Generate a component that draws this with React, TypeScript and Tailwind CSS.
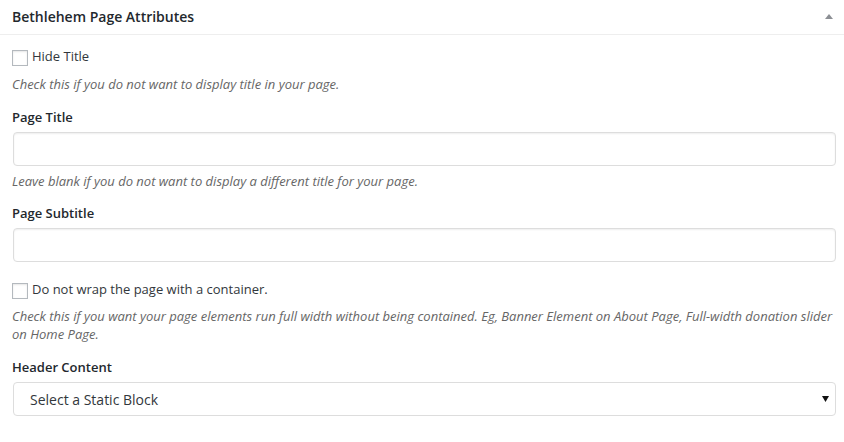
export default function App() {
  return (
    <div
      className="w-[844px] h-[442px] bg-white text-[#32373c] text-[13px]"
      style={{ fontFamily: '"Open Sans", "Liberation Sans", sans-serif' }}
    >
      {/* Metabox header */}
      <div className="h-[35px] border-b border-[#eeeeee] px-3 flex items-center justify-between">
        <h2 className="text-[14px] font-semibold text-[#23282d] leading-none">Bethlehem Page Attributes</h2>
        <svg width="8" height="5" viewBox="0 0 8 5" className="-mr-px -mt-[2px]">
          <path d="M4 0 L8 5 L0 5 Z" fill="#8c8f94" />
        </svg>
      </div>

      <div className="px-3">
        {/* Hide title */}
        <label className="mt-[15px] flex items-center h-4 gap-1">
          <span className="w-4 h-4 border border-[#b4b9be] bg-white shadow-[inset_0_1px_2px_rgba(0,0,0,0.1)]" />
          <span className="-mt-1 text-[13px] text-[#32373c] leading-none">Hide Title</span>
        </label>
        <p className="mt-[9px] leading-[18px] italic text-[#666]">
          Check this if you do not want to display title in your page.
        </p>

        {/* Page title */}
        <div className="mt-[15px] leading-[18px] font-semibold text-[#23282d]">Page Title</div>
        <div className="mt-[6px] ml-px w-[823px] h-[34px] rounded-[4px] border border-[#dddddd] shadow-[inset_0_1px_2px_rgba(0,0,0,0.07)]" />
        <p className="mt-[6px] leading-[18px] italic text-[#666]">
          Leave blank if you do not want to display a different title for your page.
        </p>

        {/* Page subtitle */}
        <div className="mt-[14px] leading-[18px] font-semibold text-[#23282d]">Page Subtitle</div>
        <div className="mt-[6px] ml-px w-[823px] h-[34px] rounded-[4px] border border-[#dddddd] shadow-[inset_0_1px_2px_rgba(0,0,0,0.07)]" />

        {/* Container wrap */}
        <label className="mt-[21px] flex items-center h-4 gap-1">
          <span className="w-4 h-4 border border-[#b4b9be] bg-white shadow-[inset_0_1px_2px_rgba(0,0,0,0.1)]" />
          <span className="-mt-1 text-[13px] text-[#32373c] leading-none">Do not wrap the page with a container.</span>
        </label>
        <p className="mt-[8px] leading-[18px] italic text-[#666]">
          <span className="whitespace-nowrap">
            Check this if you want your page elements run full width without being contained. Eg, Banner Element on About Page, Full-width donation slider
          </span>
          <br />
          on Home Page.
        </p>

        {/* Header content */}
        <div className="mt-[15px] leading-[18px] font-semibold text-[#23282d]">Header Content</div>
        <div className="mt-[6px] ml-px w-[823px] h-[34px] rounded-[4px] border border-[#dddddd] flex items-center justify-between pl-4 pr-[6px]">
          <span className="text-[14px] text-[#32373c]">Select a Static Block</span>
          <svg width="7" height="6" viewBox="0 0 7 6">
            <path d="M0 0 L7 0 L3.5 6 Z" fill="#111" />
          </svg>
        </div>
      </div>
    </div>
  );
}
